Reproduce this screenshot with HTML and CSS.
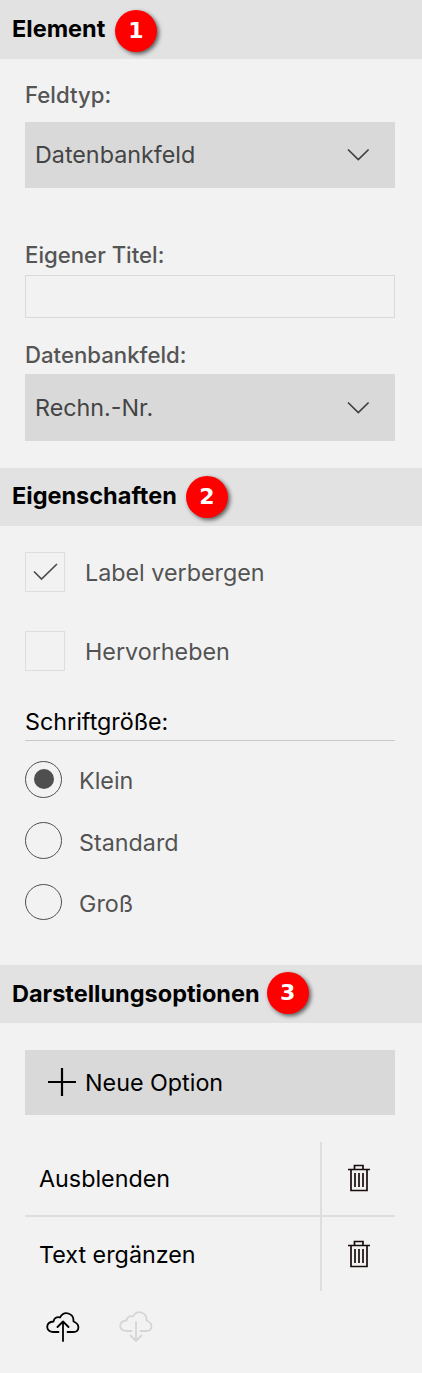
FILE: index.html
```html
<!DOCTYPE html>
<html lang="de">
<head>
<meta charset="utf-8">
<title>Element</title>
<link rel="stylesheet" href="styles.css">
</head>
<body>
<main class="panel">
  <h2 class="head head-first"><span>Element</span><span class="badge badge-1">1</span></h2>
  <section class="fields">
    <div class="label">Feldtyp:</div>
    <div class="select"><span>Datenbankfeld</span>
      <svg class="chevron" width="24" height="14" viewBox="0 0 24 14"><path d="M2 1.500 12.300 11.500 22.600 1.500"/></svg></div>
    <div class="label l-title">Eigener Titel:</div>
    <div class="input"></div>
    <div class="label l-db">Datenbankfeld:</div>
    <div class="select select-tall"><span>Rechn.-Nr.</span>
      <svg class="chevron" width="24" height="14" viewBox="0 0 24 14"><path d="M2 1.500 12.300 11.500 22.600 1.500"/></svg></div>
  </section>
  <h2 class="head head-props"><span>Eigenschaften</span><span class="badge badge-2">2</span></h2>
  <section class="props">
    <div class="check"><span class="box"><svg width="38" height="38" viewBox="0 0 38 38"><path d="M8 18.500 15.500 26 31 11"/></svg></span><span class="check-text">Label verbergen</span></div>
    <div class="check"><span class="box"></span><span class="check-text">Hervorheben</span></div>
    <div class="group"><span>Schriftgröße:</span></div>
    <div class="radio"><svg class="ring" width="37" height="37" viewBox="0 0 37 37"><circle cx="18.5" cy="18.5" r="18"/><circle class="dot" cx="19" cy="18" r="10"/></svg><span>Klein</span></div>
    <div class="radio radio-mid"><svg class="ring" width="37" height="37" viewBox="0 0 37 37"><circle cx="18.5" cy="18.5" r="18"/></svg><span>Standard</span></div>
    <div class="radio"><svg class="ring" width="37" height="37" viewBox="0 0 37 37"><ellipse cx="18.5" cy="18" rx="18" ry="17.5"/></svg><span>Groß</span></div>
  </section>
  <h2 class="head"><span>Darstellungsoptionen</span><span class="badge badge-3">3</span></h2>
  <section class="options">
    <div class="add"><svg class="plus" width="30" height="30" viewBox="0 0 30 30"><path d="M1 15H29M15 1V29"/></svg><span>Neue Option</span></div>
    <div class="table">
      <div class="row"><div class="name"><span>Ausblenden</span></div><div class="del"><svg class="trash" width="24" height="28" viewBox="0 0 24 28"><path d="M1 5.500H23M7.500 5V1.500H16V5M4 6V26.500H20V6M8 9V23M12 9V23M16 9V23"/></svg></div></div>
      <div class="row"><div class="name"><span>Text ergänzen</span></div><div class="del"><svg class="trash" width="24" height="28" viewBox="0 0 24 28"><path d="M1 5.500H23M7.500 5V1.500H16V5M4 6V26.500H20V6M8 9V23M12 9V23M16 9V23"/></svg></div></div>
    </div>
    <div class="transfer">
      <svg class="cloud" width="34" height="32" viewBox="0 0 34 32"><path d="M12.500 21H7C-1 20-.5 11 7.500 10.500C8 7 11 5.500 14 6.500C18-1 28 2 27.500 10.500C34.500 13 33.500 21 27.500 21H21.500M17 30V11M11.500 16 17 10.500 22.500 16"/></svg>
      <svg class="cloud cloud-off" width="34" height="32" viewBox="0 0 34 32"><path d="M12.500 20H7C-1 19-.5 10 7.500 9.500C8 6 11 4.500 14 5.500C18-2 28 1 27.500 9.500C34.500 12 33.500 20 27.500 20H21.500M17 11V30M11.500 24.500 17 30 22.500 24.500"/></svg>
    </div>
  </section>
</main>
</body>
</html>
```
FILE: styles.css
```css
* { box-sizing: border-box; }
body { margin: 0; background: #f2f2f2; font: 400 23.3px/30px Inter, sans-serif; color: #535353; }
svg { display: block; flex: none; fill: none; stroke: #000; }
span { white-space: nowrap; }
.panel { width: 422px; height: 1373px; overflow: hidden; }
.head { display: flex; align-items: flex-start; height: 58px; margin: 0; padding: 14px 12px 0; background: #e2e2e2; color: #000; font-size: 23.5px; font-weight: 700; line-height: 30px; }
.head-first { height: 59px; }
.head-props { padding-top: 13px; }
.badge { flex: none; width: 42px; height: 42px; border-radius: 50%; background: #f00; color: #fff; font: bold 22px/41px "DejaVu Sans", sans-serif; text-align: center; box-shadow: 2px 2px 4px rgba(0,0,0,.6); }
.badge-1 { margin: -4.5px 0 0 9.5px; }
.badge-2 { margin: -5.5px 0 0 9px; }
.badge-3 { margin: -7.5px 0 0 7px; }
.fields { height: 409px; padding: 21px 27px 0 25px; }
.label { height: 42px; font-size: 22.2px; font-weight: 500; color: #555; }
.l-title { height: 35px; margin-top: 52px; }
.l-db { height: 34px; margin-top: 22px; }
.select { display: flex; align-items: center; justify-content: space-between; height: 66px; padding: 0 25px 0 10px; background: #d9d9d9; color: #444; }
.select-tall { height: 67px; }
.chevron { stroke: #404040; stroke-width: 1.7; }
.input { height: 43px; border: 1px solid #d9d9d9; }
.props { height: 439px; padding: 26px 27px 0 25px; }
.check { display: flex; align-items: center; gap: 20px; height: 40px; margin-bottom: 39px; }
.check-text { padding-top: 2px; }
.box { width: 40px; height: 40px; border: 1px solid #dedede; }
.box svg { stroke: #4d4d4d; stroke-width: 1.7; }
.group { height: 34px; margin: -3px 0 20px; border-bottom: 1px solid #c9c9c9; color: #000; }
.radio { display: flex; gap: 17px; height: 37px; margin-bottom: 24px; line-height: 40px; }
.radio-mid { margin-bottom: 25px; line-height: 42px; }
.ring { stroke: #4f4f4f; stroke-width: 1; }
.dot { fill: #4f4f4f; stroke: none; }
.options { padding: 27px 27px 0 25px; color: #000; }
.add { display: flex; align-items: center; height: 65px; padding-left: 22px; gap: 8px; background: #d9d9d9; }
.plus { stroke-width: 2.2; margin-top: -2px; }
.table { margin-top: 27px; }
.row { display: grid; grid-template-columns: 297px 73px; height: 75px; border-bottom: 2px solid #dedede; }
.row:last-child { height: 74px; border: 0; }
.name { display: flex; align-items: center; padding-left: 14px; border-right: 2px solid #dedede; }
.row:last-child .name { padding-top: 2px; }
.del { display: flex; align-items: center; justify-content: center; }
.trash { stroke: #1a0c0c; stroke-width: 1.7; margin-left: 1px; margin-top: -1px; }
.row:last-child .trash { margin-top: 0; }
.transfer { display: flex; gap: 39px; padding: 20px 0 0 20.5px; }
.cloud { stroke-width: 1.8; stroke-linecap: round; stroke-linejoin: round; }
.cloud-off { stroke: #d5d5d5; }
```
